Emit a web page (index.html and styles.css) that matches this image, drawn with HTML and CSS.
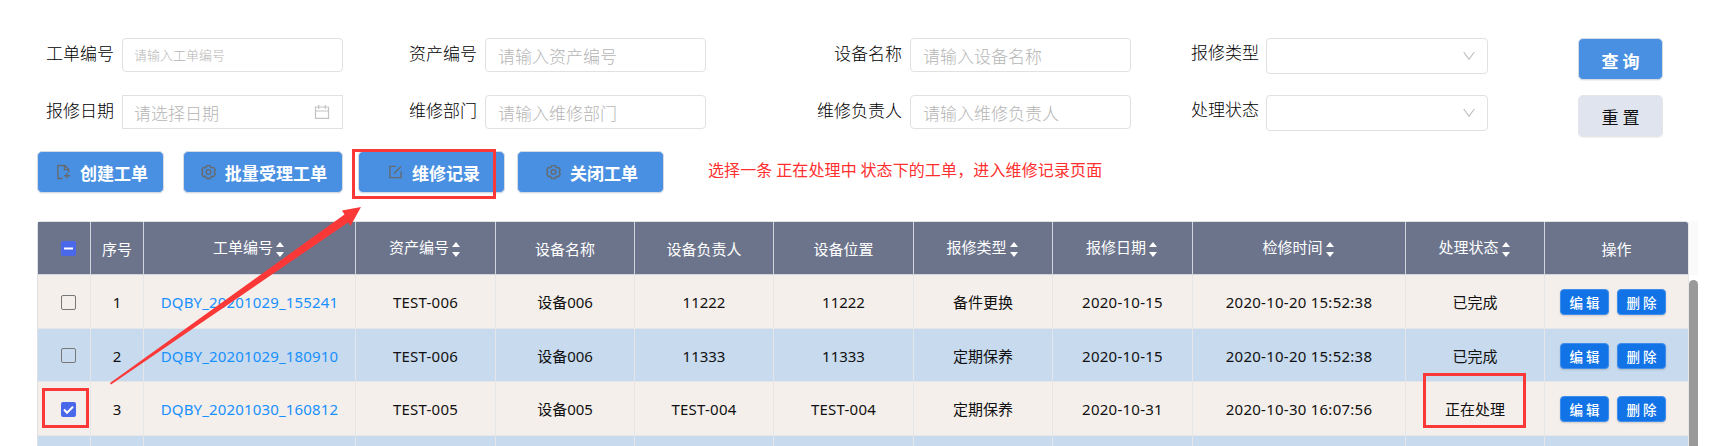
FILE: index.html
```html
<!DOCTYPE html>
<html lang="zh-CN">
<head>
<meta charset="utf-8">
<title>维修工单</title>
<link rel="stylesheet" href="styles.css">
</head>
<body>
<svg class="defs" width="0" height="0">
  <symbol id="gear" viewBox="0 0 16 16"><path d="M6 1.2h4l.6 1.7 1.2.7 1.8-.4 1.6 2.8-.9 1.5v1.2l.9 1.5-1.6 2.7-1.8-.3-1.2.7L10 15H6l-.6-1.7-1.2-.7-1.8.3L.8 10.200l.9-1.500V7.500L.8 6l1.600-2.800 1.800.4 1.200-.7z"/><circle cx="8" cy="8" r="2.500"/></symbol>
  <symbol id="calendar" viewBox="0 0 16 16"><path d="M1.500 3h13v11.300h-13zM1.500 7h13M4.700 1v4M11.300 1v4"/></symbol>
  <symbol id="down" viewBox="0 0 12 10"><path d="M.7 1l5.300 7.300L11.300 1"/></symbol>
  <symbol id="sort" viewBox="0 0 8 15"><path d="M0 5l4-5 4 5zM0 10h8l-4 5z"/></symbol>
</svg>
<main class="page">
  <form class="search">
    <label>工单编号</label><div class="input small">请输入工单编号</div>
    <label>资产编号</label><div class="input">请输入资产编号</div>
    <label>设备名称</label><div class="input">请输入设备名称</div>
    <label class="up">报修类型</label><div class="input select"><svg class="down"><use href="#down"/></svg></div>
    <div class="btn query">查 询</div>
    <label>报修日期</label><div class="input date">请选择日期<svg class="cal"><use href="#calendar"/></svg></div>
    <label>维修部门</label><div class="input">请输入维修部门</div>
    <label>维修负责人</label><div class="input">请输入维修负责人</div>
    <label class="up">处理状态</label><div class="input select"><svg class="down"><use href="#down"/></svg></div>
    <div class="btn reset">重 置</div>
  </form>
  <div class="actions">
    <div class="btn create"><svg class="ico" viewBox="0 0 16 16"><path d="M7 15H2V1h7.500l4 4v3.500M9 1.500V5.500h4M11.500 9v6M8.500 12h6.500"/></svg>创建工单</div>
    <div class="btn batch"><svg class="ico"><use href="#gear"/></svg>批量受理工单</div>
    <div class="btn record"><svg class="ico" viewBox="0 0 16 16"><path d="M8.500 2H2v12h12V7.500M6.500 9.500L14 2"/></svg>维修记录</div>
    <div class="btn close"><svg class="ico"><use href="#gear"/></svg>关闭工单</div>
    <p class="note">选择一条 正在处理中 状态下的工单，进入维修记录页面</p>
  </div>
  <div class="table-wrap">
    <table>
      <colgroup><col class="c1"><col class="c2"><col class="c3"><col class="c4"><col class="c5"><col class="c6"><col class="c7"><col class="c8"><col class="c9"><col class="c10"><col class="c11"><col class="c12"></colgroup>
      <thead><tr>
        <th><span class="check on"><svg viewBox="0 0 15 15"><path d="M3 7.500h9"/></svg></span></th><th>序号</th>
        <th class="s">工单编号<svg class="sort"><use href="#sort"/></svg></th><th class="s">资产编号<svg class="sort"><use href="#sort"/></svg></th>
        <th>设备名称</th><th>设备负责人</th><th>设备位置</th>
        <th class="s">报修类型<svg class="sort"><use href="#sort"/></svg></th><th class="s">报修日期<svg class="sort"><use href="#sort"/></svg></th><th class="s">检修时间<svg class="sort"><use href="#sort"/></svg></th><th class="s">处理状态<svg class="sort"><use href="#sort"/></svg></th><th>操作</th>
      </tr></thead>
      <tbody>
        <tr><td><span class="check"></span></td><td>1</td><td class="link">DQBY_20201029_155241</td><td class="code">TEST-006</td><td>设备006</td><td>11222</td><td>11222</td><td>备件更换</td><td class="code">2020-10-15</td><td class="code">2020-10-20 15:52:38</td><td>已完成</td><td><div class="ops"><span class="op">编 辑</span><span class="op">删 除</span></div></td></tr>
        <tr><td><span class="check"></span></td><td>2</td><td class="link">DQBY_20201029_180910</td><td class="code">TEST-006</td><td>设备006</td><td>11333</td><td>11333</td><td>定期保养</td><td class="code">2020-10-15</td><td class="code">2020-10-20 15:52:38</td><td>已完成</td><td><div class="ops"><span class="op">编 辑</span><span class="op">删 除</span></div></td></tr>
        <tr><td><span class="check on"><svg viewBox="0 0 15 15"><path d="M3 7.500l3 3.200 6-6"/></svg></span></td><td>3</td><td class="link">DQBY_20201030_160812</td><td class="code">TEST-005</td><td>设备005</td><td class="code">TEST-004</td><td class="code">TEST-004</td><td>定期保养</td><td class="code">2020-10-31</td><td class="code">2020-10-30 16:07:56</td><td>正在处理</td><td><div class="ops"><span class="op">编 辑</span><span class="op">删 除</span></div></td></tr>
        <tr><td></td><td></td><td></td><td></td><td></td><td></td><td></td><td></td><td></td><td></td><td></td><td></td></tr>
      </tbody>
    </table>
    <div class="gutter"><div class="corner"></div><div class="thumb"></div></div>
  </div>
</main>
<div class="mark m-record"></div>
<div class="mark m-check"></div>
<div class="mark m-status"></div>
<svg class="arrow" width="260" height="185" viewBox="0 0 260 185"><path d="M0 178L234.500 9.500 232 5.500 251 2 240.500 21 238 17.500 1 179.500z"/></svg>
</body>
</html>
```
FILE: styles.css
```css
* { box-sizing: border-box; }
html, body { margin: 0; width: 1712px; height: 446px; overflow: hidden; background: #fff; }
body { position: relative; font-family: "Noto Sans", "Noto Sans CJK SC", sans-serif; color: #111; }
.defs { position: absolute; }
.page { padding: 38px 0 0 37px; height: 446px; overflow: hidden; }
.search { display: grid; grid-template-columns: 85px 221px 142px 221px 204px 221px 135px 222px 173px; grid-template-rows: 57px 56px; align-items: start; }
label { font: 300 17px/30px "Noto Sans CJK SC", sans-serif; text-align: right; padding-right: 8px; white-space: nowrap; color: #000; }
label.up { padding-right: 7px; line-height: 28px; }
.input { height: 34px; border: 1px solid #e1e1e1; border-radius: 4px; padding: 0 12px; font: 300 17px/33px "Noto Sans CJK SC", sans-serif; color: #b5b5b5; white-space: nowrap; }
.input.small { font-size: 13px; line-height: 31px; padding-left: 11px; }
.input.date { border-radius: 0; display: flex; justify-content: space-between; align-items: center; padding-left: 11px; }
.input.select { height: 36px; display: flex; align-items: center; justify-content: flex-end; }
svg { fill: none; flex: none; }
.cal { width: 16px; height: 16px; stroke: #c4c4c4; stroke-width: 1.200; }
.down { width: 12px; height: 10px; stroke: #bdbdbd; stroke-width: 1.100; }
.btn { display: flex; align-items: center; justify-content: center; height: 42px; background: #4990e2; border: 1px solid #d4dbe4; border-radius: 5px; color: #fff; font: 700 17px/40px "Noto Sans CJK SC", sans-serif; white-space: nowrap; box-shadow: 0 1px 1px rgba(0,0,0,.06); }
.query, .reset { margin-left: 90px; width: 85px; padding-top: 3px; }
.reset { background: #dfe4ef; border-color: #e5e6ea; color: #111; font-weight: 400; padding-top: 2px; }
.actions { display: flex; height: 70px; }
.ico { width: 15px; height: 16px; stroke: #666a6e; stroke-width: 1.500; margin: -3px 9px 0 0; }
.create { width: 127px; padding-left: 3px; }
.batch { width: 160px; margin-left: 19px; padding-left: 2px; letter-spacing: .1px; }
.record { width: 147px; margin-left: 15px; padding-left: 5px; }
.close { width: 147px; margin-left: 12px; padding-left: 3px; }
.btn.create, .btn.batch, .btn.record, .btn.close { padding-top: 2px; }
.note { margin: 0 0 0 44px; font: 400 16px/36px "Noto Sans CJK SC", sans-serif; letter-spacing: .12px; color: #ff2f2f; white-space: nowrap; }
.table-wrap { display: flex; }
table { width: 1652px; border-collapse: separate; border-spacing: 0; table-layout: fixed; border-top: 1px solid #e3e3e3; border-left: 1px solid #dfe0e3; border-radius: 4px 4px 0 0; }
.c1 { width: 53px; } .c2 { width: 53px; } .c3 { width: 212px; } .c4 { width: 140px; } .c5 { width: 139px; } .c6 { width: 139px; } .c7 { width: 140px; } .c8 { width: 139px; } .c9 { width: 140px; } .c10 { width: 213px; } .c11 { width: 139px; } .c12 { width: 144px; }
th, td { padding: 0; text-align: center; vertical-align: middle; font-size: 15px; line-height: 22px; border-right: 1px solid #e5e6e8; border-bottom: 1px solid #e5e6e8; white-space: nowrap; font-weight: 400; }
th { height: 53px; background: #6c748c; color: #fff; border-color: #d3d6de; font-family: "Noto Sans CJK SC", sans-serif; padding-top: 1px; }
th.s { padding: 0 2px 3px 0; }
th:last-child, td:last-child { border-right-color: #e9e9ec; }
th:last-child { border-top-right-radius: 3px; }
td { height: 54px; background: #f4efeb; padding-top: 1px; }
tr:nth-child(2) td { height: 53px; }
tr:nth-child(even) td { background: #c7daee; }
.sort { width: 8px; height: 15px; fill: #fff; vertical-align: -4px; margin-left: 3px; }
.link { color: #1890ff; letter-spacing: .16px; }
.code { letter-spacing: .25px; }
.check { display: block; width: 15px; height: 15px; margin: 0 auto; border: 1px solid #777; border-radius: 2px; position: relative; left: 4px; }
.check.on { background: #4a68ea; border: 0; }
.check svg { display: block; width: 15px; height: 15px; stroke: #fff; stroke-width: 2; }
.ops { display: flex; gap: 8px; padding-left: 15px; }
.op { width: 49px; height: 26px; border-radius: 4px; background: #1273e6; color: #fff; border: 1px solid #3f8eec; font: 500 13.500px/25px "Noto Sans CJK SC", sans-serif; box-shadow: 0 1px 2px rgba(0,0,0,.15); }
.gutter { width: 9px; display: flex; flex-direction: column; gap: 5px; }
.corner { height: 54px; background: #fafafa; }
.thumb { flex: 1; background: #999; border-radius: 5px 5px 0 0; }
.mark { position: absolute; border: 3px solid #fb3838; }
.m-record { left: 352px; top: 149px; width: 144px; height: 50px; }
.m-check { left: 42px; top: 388px; width: 47px; height: 40px; }
.m-status { left: 1423px; top: 373px; width: 103px; height: 55px; }
.arrow { position: absolute; left: 110px; top: 205px; fill: #fb3838; }
```
